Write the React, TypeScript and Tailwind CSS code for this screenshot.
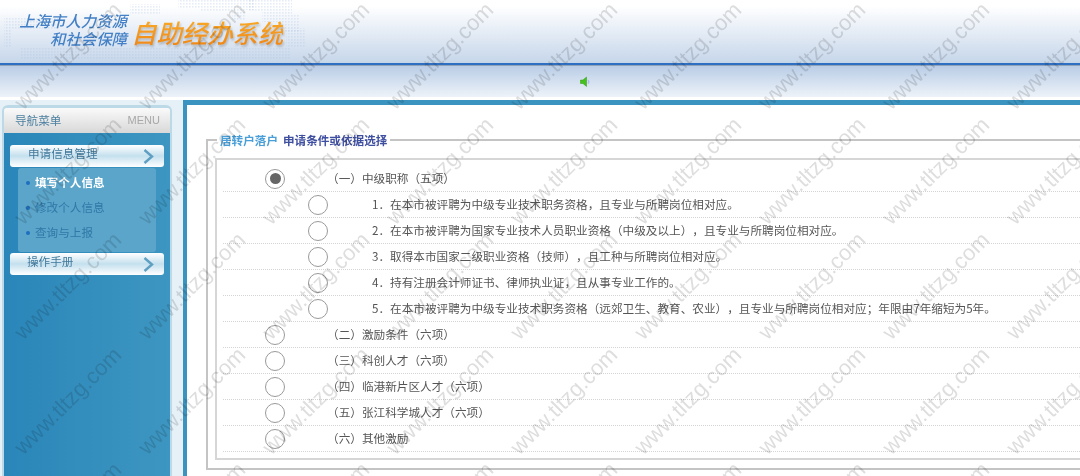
const font = { fontFamily: '"Noto Sans CJK SC", "Liberation Sans", sans-serif' };

const marks: { x: number; y: number }[] = [];
for (const y of [5, 120, 235, 350, 465]) {
  for (let x = -5; x < 1240; x += 124) marks.push({ x: x - 51, y: y + 51 });
}

function Radio({ on }: { on?: boolean }) {
  return (
    <span className="flex h-5 w-5 shrink-0 items-center justify-center rounded-full border-[1.5px] border-[#9a9a9a] bg-white">
      {on && <span className="h-[11px] w-[11px] rounded-full bg-[#666666]" />}
    </span>
  );
}

function Row({ text, sub, on }: { text: string; sub?: boolean; on?: boolean }) {
  return (
    <div className="flex h-[26px] items-center border-b border-dotted border-[#d4d4d4]">
      <div className={sub ? "flex items-center pl-[85px]" : "flex items-center pl-[42px]"}>
        <Radio on={on} />
        <span className={sub ? "ml-[44px] whitespace-nowrap text-[11.63px] text-[#555555]" : "ml-[42px] whitespace-nowrap text-[11.63px] text-[#555555]"}>
          {text}
        </span>
      </div>
    </div>
  );
}

function Chevron() {
  return (
    <svg width="11" height="15" viewBox="0 0 11 15" className="shrink-0">
      <path d="M1.5 1 L9 7.5 L1.5 14" fill="none" stroke="#5f9fc2" strokeWidth="2.4" />
    </svg>
  );
}

function MenuButton({ text, pad }: { text: string; pad: string }) {
  return (
    <div className={`flex h-[22px] items-center justify-between rounded-[3px] bg-gradient-to-b from-white via-[#c4e0ee] to-white pr-[10px] ${pad}`}>
      <span className="-mt-[5px] text-[11.6px] text-[#41789a]">{text}</span>
      <Chevron />
    </div>
  );
}

function SubItem({ text, active }: { text: string; active?: boolean }) {
  return (
    <div className="flex h-[25px] items-center pl-[8px]">
      <span className="mr-[5px] h-[4px] w-[4px] rounded-full bg-[#1d6fc0]" />
      <span className={active ? "text-[11.6px] font-bold text-white" : "text-[11.6px] text-[#2f78a8]"}>{text}</span>
    </div>
  );
}

function WorldDots() {
  return (
    <svg width="330" height="62" className="absolute left-0 top-0">
      <defs>
        <pattern id="d" width="3" height="3" patternUnits="userSpaceOnUse">
          <rect width="1.6" height="1.6" fill="#a9bfdc" fillOpacity="0.28" />
        </pattern>
      </defs>
      <path d="M178 0 H255 V10 H246 V20 H232 V12 H200 V8 H178 Z" fill="url(#d)" />
      <path d="M248 0 H292 V14 H300 V32 H282 V22 H262 V12 H248 Z" fill="url(#d)" />
      <path d="M130 4 H160 V14 H130 Z" fill="url(#d)" />
      <path d="M4 18 H60 V30 H12 V48 H4 Z" fill="url(#d)" />
      <path d="M20 48 H290 V60 H20 Z" fill="url(#d)" />
      <path d="M286 28 H306 V48 H286 Z" fill="url(#d)" />
    </svg>
  );
}

function Speaker() {
  return (
    <svg width="12" height="12" viewBox="0 0 12 12">
      <path d="M0.5 4 H3 L6.5 1 V10.5 L3 7.5 H0.5 Z" fill="#45c01e" stroke="#2f9a10" strokeWidth="0.5" />
      <path d="M8 4 Q9.6 5.8 8 7.6" fill="none" stroke="#b4b4ee" strokeWidth="1.4" />
    </svg>
  );
}

export default function App() {
  return (
    <div className="relative flex h-[476px] w-[1080px] flex-col overflow-hidden bg-[#e6f0f7] blur-[0.35px] [text-spacing-trim:space-all]" style={font}>
      {/* header */}
      <header className="relative flex h-[63px] shrink-0 bg-gradient-to-b from-white from-10% to-[#c6d6ea] pl-[19px] pt-[11px]">
        <WorldDots />
        <div className="relative flex w-[108px] flex-col items-end text-[15.4px] font-medium italic leading-[18px] text-[#4480c6]">
          <span className="whitespace-nowrap">上海市人力资源</span>
          <span className="whitespace-nowrap">和社会保障</span>
        </div>
        <span className="relative ml-[4px] mt-[5px] whitespace-nowrap bg-gradient-to-b from-[#f9ae2a] to-[#e96f04] bg-clip-text text-[25.4px] font-medium italic leading-[32px] text-transparent drop-shadow-[1px_2px_1px_rgba(90,90,90,0.35)]">
          自助经办系统
        </span>
      </header>
      <div className="h-[2px] shrink-0 bg-[#2f6fc2]" />
      <div className="h-px shrink-0 bg-[#8fa2ba]" />
      <div className="flex h-[31px] shrink-0 items-center bg-gradient-to-b from-[#b9cde6] to-[#eef3f9] pl-[580px]">
        <Speaker />
      </div>
      <div className="h-[3px] shrink-0 bg-white" />

      {/* main */}
      <main className="flex min-h-0 flex-1">
        <aside className="w-[183px] shrink-0 pl-[2px] pt-[5px]">
          <div className="h-[400px] w-[170px] rounded-t-[6px] border-x-2 border-t-[3px] border-[#bcd9e8]">
            <div className="flex h-[25px] items-center justify-between rounded-t-[3px] bg-gradient-to-b from-[#fafafa] to-[#d8d8d8] pl-[11px] pr-[10px]">
              <span className="text-[11.6px] text-[#4c7f9f]">导航菜单</span>
              <span className="text-[11px] text-[#a8a8a8]" style={{ fontFamily: '"Liberation Sans", sans-serif' }}>MENU</span>
            </div>
            <div className="h-[372px] bg-gradient-to-r from-[#2a86b9] to-[#3d96c1] px-[6px] pt-[12px]">
              <MenuButton text="申请信息管理" pad="pl-[18px]" />
              <div className="mx-[8px] my-px h-[84px] rounded-[3px] bg-[#5ba5cb] pt-[2px]">
                <SubItem text="填写个人信息" active />
                <SubItem text="修改个人信息" />
                <SubItem text="查询与上报" />
              </div>
              <MenuButton text="操作手册" pad="pl-[17px]" />
            </div>
          </div>
        </aside>
        <section className="min-w-0 flex-1 border-l-4 border-t-[5px] border-[#3b93c0] bg-white pl-[19px] pt-[27px]">
          <fieldset className="-mr-4 h-[338px] border-2 border-[#c4c4c4]">
            <legend className="ml-[9px] whitespace-nowrap px-[3px] text-[11.6px] font-bold leading-[16px]">
              <span className="text-[#4a9fd8]">居转户落户</span>
              <span className="ml-[5px] text-[#3f4f9f]">申请条件或依据选择</span>
            </legend>
            <div className="-mr-2 ml-[7px] mt-[10px] h-[302px] border-2 border-[#d6d6d6] pl-[6px] pt-[6px]">
              <Row on text="（一）中级职称（五项）" />
              <Row sub text="1．在本市被评聘为中级专业技术职务资格，且专业与所聘岗位相对应。" />
              <Row sub text="2．在本市被评聘为国家专业技术人员职业资格（中级及以上），且专业与所聘岗位相对应。" />
              <Row sub text="3．取得本市国家二级职业资格（技师），且工种与所聘岗位相对应。" />
              <Row sub text="4．持有注册会计师证书、律师执业证，且从事专业工作的。" />
              <Row sub text="5．在本市被评聘为中级专业技术职务资格（远郊卫生、教育、农业），且专业与所聘岗位相对应；年限由7年缩短为5年。" />
              <Row text="（二）激励条件（六项）" />
              <Row text="（三）科创人才（六项）" />
              <Row text="（四）临港新片区人才（六项）" />
              <Row text="（五）张江科学城人才（六项）" />
              <Row text="（六）其他激励" />
            </div>
          </fieldset>
        </section>
      </main>

      {/* watermark */}
      <div className="pointer-events-none absolute inset-0 overflow-hidden mix-blend-multiply">
        {marks.map((m, i) => (
          <span
            key={i}
            className="absolute -translate-x-1/2 -translate-y-1/2 -rotate-45 whitespace-nowrap text-[22px] leading-none text-[#dedede]"
            style={{ left: m.x, top: m.y, fontFamily: '"Liberation Sans", sans-serif' }}
          >
            www.tltzg.com
          </span>
        ))}
      </div>
    </div>
  );
}
